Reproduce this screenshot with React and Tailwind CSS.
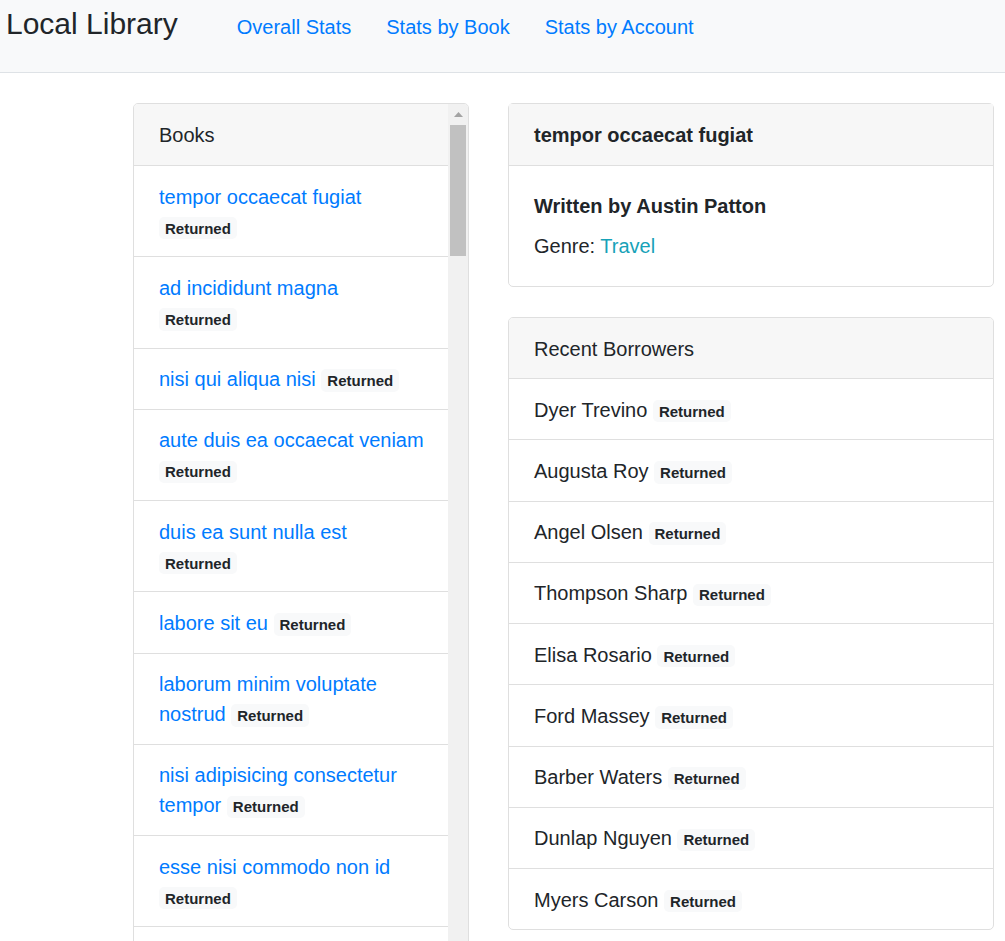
import React from "react";

const LINK = "text-[#007bff] whitespace-nowrap";

function Badge() {
  return (
    <span className="inline-block rounded-[5px] bg-[#f8f9fa] px-[6px] py-[3.75px] text-[15px] font-bold leading-none text-[#212529] align-baseline">
      Returned
    </span>
  );
}

const books = [
  { t: ["tempor occaecat fugiat"], br: true },
  { t: ["ad incididunt magna"], br: true },
  { t: ["nisi qui aliqua nisi"], br: false },
  { t: ["aute duis ea occaecat veniam"], br: true },
  { t: ["duis ea sunt nulla est"], br: true },
  { t: ["labore sit eu"], br: false },
  { t: ["laborum minim voluptate", "nostrud"], br: false },
  { t: ["nisi adipisicing consectetur", "tempor"], br: false },
  { t: ["esse nisi commodo non id"], br: true },
];

const borrowers = [
  "Dyer Trevino",
  "Augusta Roy",
  "Angel Olsen",
  "Thompson Sharp",
  "Elisa Rosario",
  "Ford Massey",
  "Barber Waters",
  "Dunlap Nguyen",
  "Myers Carson",
];

function BookItem({ b }) {
  return (
    <div className="border-b border-[#dfdfdf] px-[25px] pb-[14.625px] pt-[15.625px] text-[20px] leading-[30px]">
      {b.t.length === 2 ? (
        <>
          <a className={LINK}>{b.t[0]}</a>
          <br />
          <a className={LINK}>{b.t[1]}</a> <Badge />
        </>
      ) : b.br ? (
        <>
          <a className={LINK}>{b.t[0]}</a>
          <br />
          <Badge />
        </>
      ) : (
        <>
          <a className={LINK}>{b.t[0]}</a> <Badge />
        </>
      )}
    </div>
  );
}

function Scrollbar() {
  return (
    <div className="flex w-[20px] shrink-0 flex-col bg-[#f1f1f1]">
      <div className="flex h-[21px] items-center justify-center">
        <svg width="9" height="5" viewBox="0 0 9 5">
          <polygon points="0,5 4.5,0 9,5" fill="#a3a3a3" />
        </svg>
      </div>
      <div className="mx-[2px] h-[131px] bg-[#c1c1c1]" />
    </div>
  );
}

export default function App() {
  return (
    <div
      className="h-[941px] overflow-hidden bg-white text-[#212529]"
      style={{ fontFamily: '"Liberation Sans", Arial, sans-serif' }}
    >
      <nav className="flex h-[73px] items-baseline border-b border-[#dee2e6] bg-[#f8f9fa] pl-[6px] pt-[1px]">
        <a className="text-[30px] leading-[45px] text-[#212529]">Local Library</a>
        <div className="ml-[59px] flex items-baseline gap-[35px] text-[20px] leading-[30px]">
          <a className={LINK}>Overall Stats</a>
          <a className={LINK}>Stats by Book</a>
          <a className={LINK}>Stats by Account</a>
        </div>
      </nav>

      <main className="mt-[30px] flex items-start gap-[39px] pl-[133px]">
        <section className="flex h-[850px] w-[336px] shrink-0 overflow-hidden rounded-[5px] border border-[#dfdfdf]">
          <div className="min-w-0 flex-1">
            <div className="border-b border-[#dfdfdf] bg-[#f7f7f7] px-[25px] pb-[15px] pt-[16px] text-[20px] leading-[30px]">
              Books
            </div>
            {books.map((b, i) => (
              <BookItem key={i} b={b} />
            ))}
          </div>
          <Scrollbar />
        </section>

        <div className="flex w-[486px] shrink-0 flex-col">
          <section className="rounded-[5px] border border-[#dfdfdf]">
            <div className="border-b border-[#dfdfdf] bg-[#f7f7f7] px-[25px] pb-[15px] pt-[16px] text-[20px] font-bold leading-[30px]">
              tempor occaecat fugiat
            </div>
            <div className="p-[25px] text-[20px] leading-[30px]">
              <h5 className="mb-[10px] font-semibold">Written by Austin Patton</h5>
              <p>
                Genre: <a className="text-[#17a2b8]">Travel</a>
              </p>
            </div>
          </section>

          <section className="mt-[30px] overflow-hidden rounded-[5px] border border-[#dfdfdf]">
            <div className="border-b border-[#dfdfdf] bg-[#f7f7f7] px-[25px] pb-[14.5px] pt-[15.5px] text-[20px] leading-[30px]">
              Recent Borrowers
            </div>
            <div className="divide-y divide-[#dfdfdf]">
              {borrowers.map((n) => (
                <div key={n} className="px-[25px] pb-[14.625px] pt-[15.625px] text-[20px] leading-[30px]">
                  {n} <Badge />
                </div>
              ))}
            </div>
          </section>
        </div>
      </main>
    </div>
  );
}
